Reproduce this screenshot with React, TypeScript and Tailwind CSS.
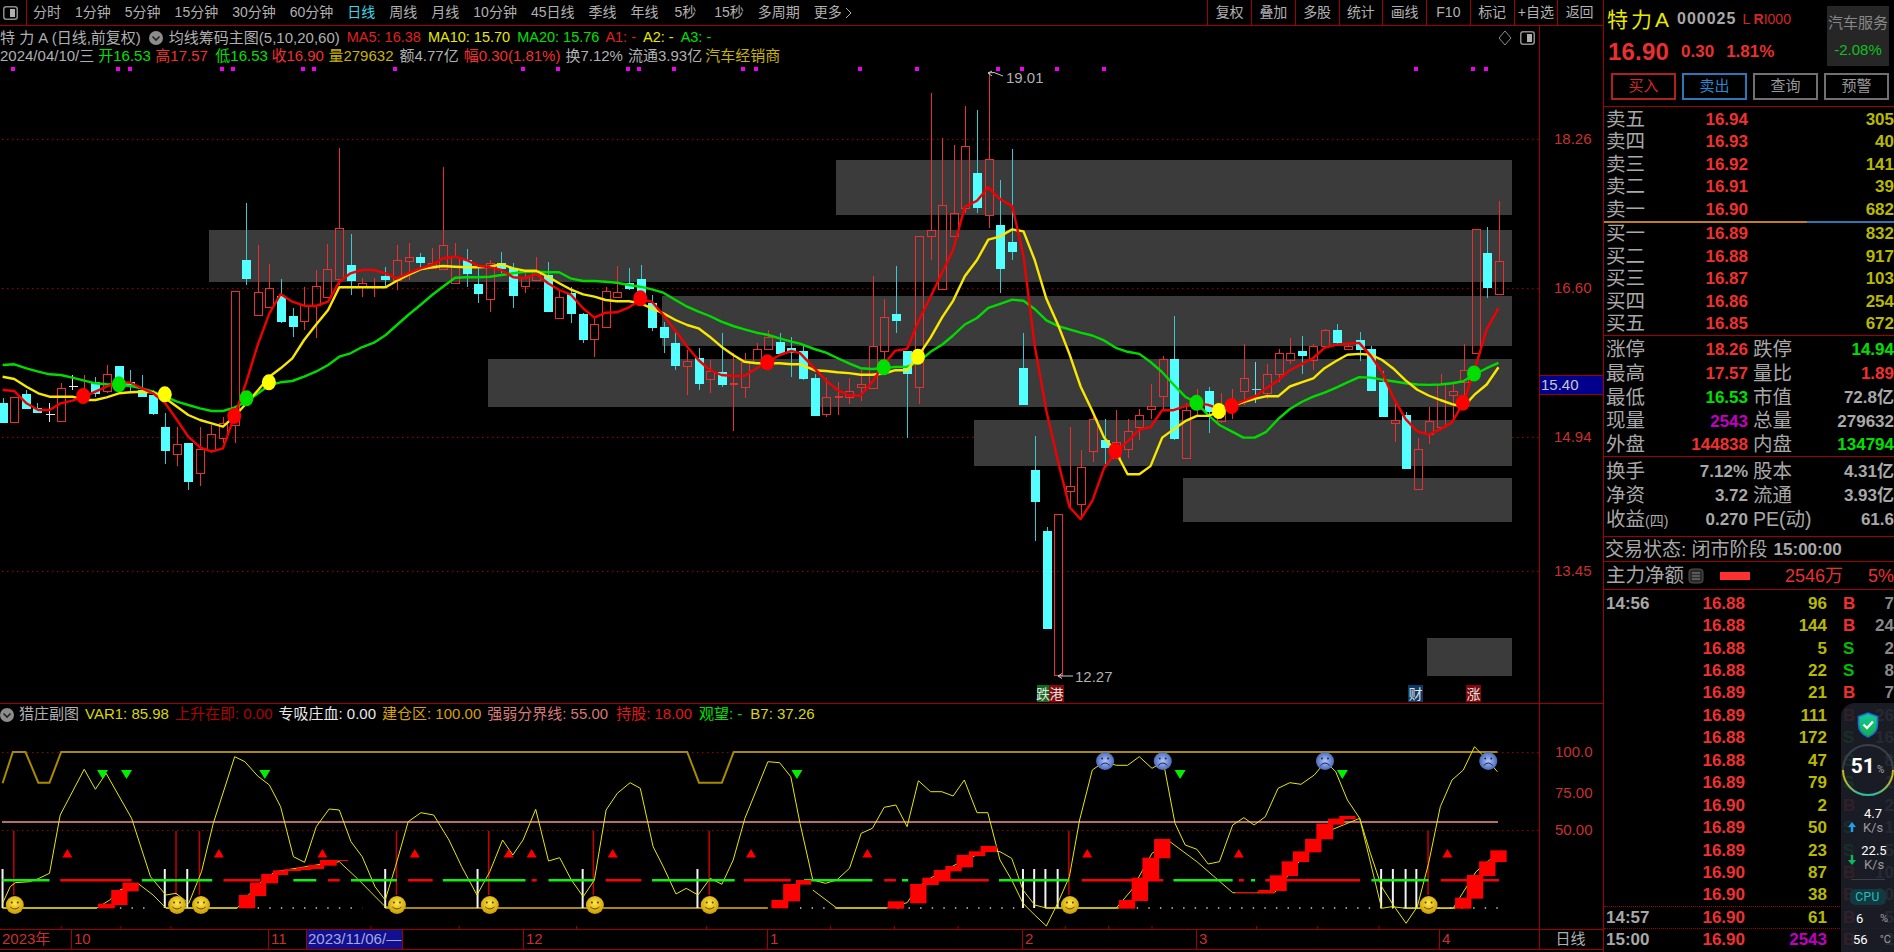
import React from "react";

const S8x = (x: number) => x / 1.96;
const S8y = (y: number) => 60 + y / 3;
const S9x = (x: number) => 800 + x / 1.96;
const S9y = (y: number) => 60 + y / 2.45;
const S6y = (y: number) => 690 + y / 3;

const pts = (a: number[], fx: (n: number) => number, fy: (n: number) => number) => {
  const o: string[] = [];
  for (let i = 0; i < a.length; i += 2) o.push(`${fx(a[i]).toFixed(1)},${fy(a[i + 1]).toFixed(1)}`);
  return o.join(" ");
};

// candles: type, wickTop, bodyTop, bodyBottom, wickBottom (zoom coordinates)
const C1: [string, number, number, number, number][] = [
  ["c",1015,1028,1085,1090],["r",1010,1010,1087,1090],["c",990,1002,1043,1045],["c",1030,1045,1057,1060],["w",1028,1061,1063,1085],["r",970,985,1082,1082],["w",945,979,981,990],["r",945,1000,1020,1030],["c",950,965,1000,1010],["r",915,943,993,1000],["c",918,918,985,990],["c",930,965,975,1000],["c",945,990,1008,1010],["c",990,1005,1058,1065],["c",1060,1100,1170,1212],["r",1102,1153,1183,1218],["c",1148,1148,1263,1290],["r",1100,1168,1238,1278],["r",1095,1122,1170,1175],["r",1070,1090,1135,1150],["r",692,692,1095,1150],["c",428,600,655,675],["r",555,695,764,764],["r",612,684,742,742],["c",656,708,783,790],["c",745,769,798,830],["r",680,735,782,810],["r",630,677,735,835],["r",552,628,710,710],["r",263,504,658,675],["c",522,615,660,705],["r",655,670,680,712],["r",655,678,682,712],["c",620,648,656,680],["r",555,601,660,690],["r",550,590,602,660],["c",580,590,607,630],["r",565,610,625,625],["r",320,556,628,630],["r",550,590,670,670],["c",567,600,640,680],["c",622,672,700,730],["r",600,610,718,757],["c",575,610,625,640],["c",610,625,705,745],["r",640,652,677,700],["r",590,635,660,660],["c",607,645,752,757],["r",690,710,773,775],["c",680,698,760,790],["c",760,762,838,848],["r",770,793,838,890],["r",680,692,800,800],["r",618,695,710,715],["c",625,670,685,690],["c",615,657,720,730],["c",705,730,802,812],["c",785,802,832,878],["c",818,848,915,930],["r",870,902,917,1005],["c",865,893,970,990],["r",900,932,958,998],["c",818,935,972,980],["f",880,970,973,1113],["r",880,905,980,1015],["r",850,868,905,905],["r",810,830,868,870],["c",820,845,878,880],["c",830,865,875,950],
];
const C2: [string, number, number, number, number][] = [
  ["c",700,712,778,785],["c",770,778,870,870],["r",780,825,868,875],["f",790,824,827,870],["r",780,810,825,842],["r",760,795,802,835],["r",528,700,803,805],["r",585,630,712,740],["c",505,622,636,668],["c",712,712,768,925],["r",430,430,800,842],["r",80,417,430,490],["r",190,356,560,560],["r",208,375,430,430],["r",113,210,362,375],["c",122,278,360,375],["r",30,243,380,412],["c",295,405,510,572],["c",218,447,468,490],["c",668,754,842,842],["c",920,1005,1080,1178],["c",1143,1155,1392,1392],["r",1113,1113,1507,1507],["r",898,1043,1057,1100],["r",955,997,1088,1120],["r",875,880,957,985],["c",880,930,947,990],["r",857,935,975,975],["r",880,910,953,975],["r",855,870,898,930],["r",795,847,856,880],["r",725,733,822,860],["c",628,733,925,930],["r",840,857,975,977],["r",805,845,855,870],["c",800,812,860,915],["r",815,862,885,890],["r",805,835,850,880],["r",695,780,810,845],["x",740,805,807,840],["r",745,770,815,830],["r",708,718,770,790],["r",680,718,735,745],["c",675,714,722,770],["r",695,700,735,760],["r",660,662,700,705],["c",647,662,692,700],["r",695,700,708,710],["c",667,685,708,738],["c",700,708,808,808],["c",762,788,872,875],["r",835,883,890,935],["c",862,870,1000,1002],["r",925,953,1052,1052],["r",850,885,917,940],["r",770,795,900,900],["r",790,810,820,880],["r",695,760,790,840],["r",415,415,717,720],["c",410,472,556,582],["r",345,492,574,574],
];

const MA5a = [5,990,28,993,52,1030,75,1050,97,1050,119,1030,142,1022,165,1010,187,995,209,980,233,965,256,968,278,985,300,1000,324,1030,347,1080,369,1130,392,1162,415,1175,437,1165,459,1070,483,965,506,850,528,760,550,702,573,725,596,737,619,738,643,725,665,665,687,640,709,630,733,630,756,640,778,655,800,640,824,625,847,615,868,595,892,590,914,600,937,617,960,622,983,630,1006,652,1028,655,1051,642,1074,670,1096,690,1118,703,1143,745,1165,773,1187,758,1209,757,1233,742,1255,720,1278,725,1300,765,1324,812,1347,860,1369,900,1391,930,1414,945,1437,948,1459,948,1483,925,1506,905,1528,885,1551,873];
const MA10a = [5,950,28,957,52,980,75,1000,97,1010,119,1010,142,1010,165,1020,187,1020,209,1012,233,1000,256,997,278,995,300,997,324,1015,347,1040,369,1065,392,1080,415,1090,437,1100,459,1070,483,1030,506,990,528,950,550,925,573,895,596,840,619,795,643,750,665,682,687,682,709,682,733,682,756,682,778,662,800,645,824,628,847,622,868,618,892,620,914,622,937,622,960,620,983,613,1006,625,1028,632,1051,632,1074,650,1096,670,1118,688,1143,703,1165,710,1187,720,1209,724,1233,724,1255,730,1278,745,1300,760,1324,780,1347,795,1369,805,1391,830,1414,860,1437,885,1459,905,1483,910,1506,910,1528,910,1551,913];
const MA20a = [5,915,28,913,52,925,75,935,97,943,119,945,142,953,165,962,187,970,209,973,233,975,256,978,278,985,300,995,324,1010,347,1025,369,1035,392,1045,415,1053,437,1053,459,1043,483,1025,506,1000,528,975,550,967,573,963,596,950,619,935,643,915,665,890,687,880,709,862,733,848,756,825,778,795,800,765,824,735,847,705,868,680,892,653,914,652,937,652,960,650,983,645,1006,640,1028,635,1051,635,1074,637,1096,637,1118,655,1143,663,1165,663,1187,665,1209,668,1233,675,1255,680,1278,688,1300,698,1324,720,1347,740,1369,755,1391,768,1414,785,1437,798,1459,808,1483,818,1506,825,1528,835,1551,845];
const MA5b = [0,718,28,755,51,785,73,808,96,822,119,822,141,790,165,745,187,712,210,708,232,640,256,580,279,520,300,465,323,360,347,345,369,312,391,340,416,358,438,480,460,700,483,860,506,985,528,1095,550,1125,573,1080,596,1000,619,960,642,935,665,905,687,900,710,858,732,858,755,848,778,840,800,845,823,855,846,848,869,835,891,825,913,805,937,785,960,760,983,745,1006,730,1028,705,1050,698,1073,695,1096,693,1119,725,1141,765,1162,825,1187,880,1210,910,1232,918,1255,905,1278,888,1300,840,1322,760,1346,660,1369,608];
const MA10b = [0,745,28,760,51,762,73,765,96,767,119,771,141,771,165,768,187,760,210,760,232,725,256,680,279,630,300,590,323,530,347,490,369,440,391,433,416,415,438,420,460,490,483,585,506,650,528,720,550,800,573,860,596,925,619,960,642,1015,665,1015,687,995,710,925,732,905,755,885,778,872,800,872,823,862,846,848,869,838,891,830,913,824,937,824,960,800,983,790,1006,780,1028,755,1050,738,1073,722,1096,720,1119,722,1141,735,1162,755,1187,785,1210,808,1232,822,1255,833,1278,843,1300,850,1322,820,1346,795,1369,753];
const MA20b = [0,695,28,708,51,717,73,730,96,743,119,755,141,757,165,755,187,752,210,752,232,740,256,715,279,697,300,675,323,648,347,632,369,607,391,598,416,587,438,590,460,610,483,638,506,652,528,660,550,668,573,675,596,687,619,705,642,715,665,720,687,740,710,765,732,795,755,825,778,840,800,870,823,895,846,910,869,925,891,925,913,912,937,880,960,855,983,838,1006,825,1028,815,1050,803,1073,790,1096,777,1119,778,1141,783,1162,787,1187,792,1210,795,1232,796,1255,795,1278,792,1300,787,1322,770,1346,755,1369,742];

const magenta = [13,118,130,222,233,303,314,395,523,558,628,639,674,743,756,860,917,998,1022,1057,1104,1416,1473,1486];
const boxes = [[836,160,676,55],[209,230,1303,52],[662,296,850,50],[488,359,1024,48],[974,420,538,46],[1183,478,329,44],[1427,638,85,38]];

const dots8: [number, number, string][] = [[163,1008,"#ff0000"],[233,973,"#00e000"],[323,1003,"#ffff00"],[483,1015,"#00e000"],[459,1068,"#ff0000"],[527,967,"#ffff00"],[1255,715,"#ff0000"],[1504,907,"#ff0000"]];
const dots9: [number, number, string][] = [[164,753,"#00e000"],[231,727,"#ffff00"],[618,958,"#ff0000"],[777,840,"#00e000"],[821,860,"#ffff00"],[846,848,"#ff0000"],[1299,840,"#ff0000"],[1321,768,"#00e000"]];

function Candles() {
  const all = [
    ...C1.map((c, i) => ({ c, i, fy: S8y })),
    ...C2.map((c, i) => ({ c, i: i + 69, fy: S9y })),
  ];
  return (
    <g shapeRendering="crispEdges">
      {all.map(({ c, i, fy }) => {
        const [t, hi, top, bot, lo] = c;
        const x = Math.round(i * 11.6 + 2.5) + 0.5;
        const yh = fy(hi), yt = Math.round(fy(top)) + 0.5, yb = Math.round(fy(bot)) + 0.5, yl = fy(lo);
        if (t === "w" || t === "x") {
          const col = t === "w" ? "#e8e8e8" : "#60e0e8";
          return (
            <g key={i} stroke={col}>
              <line x1={x} x2={x} y1={yh} y2={yl} />
              <line x1={x - 4} x2={x + 5} y1={yt} y2={yt} />
            </g>
          );
        }
        if (t === "c") {
          return (
            <g key={i}>
              <line x1={x} x2={x} y1={yh} y2={yl} stroke="#38c8d0" />
              <rect x={x - 4.5} y={yt - 0.5} width={9} height={yb - yt + 1} fill="#54ffff" />
            </g>
          );
        }
        if (t === "f") {
          return (
            <g key={i}>
              <line x1={x} x2={x} y1={yh} y2={yl} stroke="#e83030" />
              <rect x={x - 4} y={yt - 0.5} width={8} height={2} fill="#e83030" />
            </g>
          );
        }
        return (
          <g key={i} stroke="#e83030" fill="none">
            <line x1={x} x2={x} y1={yh} y2={yt} />
            <line x1={x} x2={x} y1={yb} y2={yl} />
            <rect x={x - 4} y={yt} width={8} height={Math.max(yb - yt, 1)} />
          </g>
        );
      })}
    </g>
  );
}

function MainChartSvg() {
  const line = (a: number[], b: number[], col: string) => (
    <polyline
      fill="none"
      stroke={col}
      strokeWidth={2.4}
      strokeLinejoin="round"
      points={pts(a, S8x, S8y) + " " + pts(b, S9x, S9y)}
    />
  );
  return (
    <svg className="absolute inset-0 h-full w-full" viewBox="0 26 1539 677" preserveAspectRatio="none">
      {[139.5, 288.5, 437.5, 571.5].map((y) => (
        <line key={y} x1={2} x2={1539} y1={y} y2={y} stroke="#9a0000" strokeDasharray="1.5 3.5" />
      ))}
      {boxes.map(([x, y, w, h]) => (
        <rect key={`${x}-${y}`} x={x} y={y} width={w} height={h} fill="#3b3b3b" />
      ))}
      {magenta.map((x) => (
        <rect key={x} x={x - 2} y={67} width={4} height={4} fill="#f000f0" />
      ))}
      <Candles />
      {line(MA20a, MA20b, "#00dc00")}
      {line(MA10a, MA10b, "#f8e800")}
      {line(MA5a, MA5b, "#f00000")}
      {dots8.map(([x, y, c]) => (
        <ellipse key={`${x}a`} cx={S8x(x)} cy={S8y(y)} rx={7} ry={8} fill={c} />
      ))}
      {dots9.map(([x, y, c]) => (
        <ellipse key={`${x}b`} cx={S9x(x)} cy={S9y(y)} rx={7} ry={8} fill={c} />
      ))}
      <g stroke="#c8c8c8" fill="none">
        <path d="M1003 76 L994 72.5 L988 73 M988 73 L992 71 M988 73 L992 76" />
        <path d="M1073 676 L1058 676 M1058 676 L1062 673.5 M1058 676 L1062 678.5" />
      </g>
      <text x={1006} y={83} fill="#b0b0b0" fontSize={15} fontFamily="Liberation Sans">19.01</text>
      <text x={1075} y={682} fill="#b0b0b0" fontSize={15} fontFamily="Liberation Sans">12.27</text>
      <rect x={1037} y={685} width={12} height={17} fill="#0e6a1e" />
      <rect x={1049} y={685} width={15} height={17} fill="#800808" />
      <rect x={1408} y={685} width={15} height={17} fill="#0c3a68" />
      <rect x={1466} y={685} width={15} height={17} fill="#800808" />
      <g fontSize={14} fontFamily="Noto Sans CJK SC" fill="#e0e0e0">
        <text x={1036} y={699}>跌</text>
        <text x={1049.5} y={699}>港</text>
        <text x={1408.5} y={699}>财</text>
        <text x={1466.5} y={699}>涨</text>
      </g>
    </svg>
  );
}

const Var1a = [5,640,20,590,30,578,58,575,75,566,97,550,118,375,165,238,187,298,208,250,258,385,295,560,325,615,345,610,370,640,395,545,418,400,460,200,480,215,505,258,528,285,550,350,575,500,597,517,620,410,645,357,665,360,688,455,710,500,735,590,755,630,775,530,800,395,825,368,850,375,880,450,905,530,935,615,960,545,985,450,1005,495,1025,450,1050,358,1075,513,1097,503,1120,570,1143,620,1165,570,1188,360,1210,310,1235,278,1255,295,1280,470,1300,530,1325,612,1345,595,1368,615,1392,565,1415,583,1437,510,1460,385,1505,215,1528,218,1550,260,1568,400];
const Var1b = [0,400,25,570,50,580,72,570,97,535,120,430,142,415,165,352,188,345,210,410,232,272,256,305,278,305,300,318,322,270,347,368,368,368,392,510,415,570,437,640,460,675,483,708,505,640,528,560,548,390,573,240,596,215,620,226,642,226,665,200,690,235,712,215,735,400,755,465,778,478,800,522,822,515,848,405,870,383,890,405,912,380,937,295,960,278,982,283,1008,255,1030,215,1050,245,1073,330,1097,385,1118,490,1140,590,1165,650,1188,700,1210,650,1232,520,1255,350,1278,270,1300,240,1322,170,1347,210,1367,245];
const Lowa = [5,654,190,654,215,630,235,600,270,580,300,615,325,654,465,654,490,610,515,570,540,545,620,525,665,515,700,565,755,650,785,654];
const Lowb = [25,600,72,654,170,654,210,638,232,590,255,565,322,510,368,482,392,485,415,505,437,600,460,645,483,654,620,654,650,600,690,490,725,455,778,515,848,608,930,608,970,530,1025,430,1097,385,1140,655,1160,650,1188,655,1280,655,1325,545,1367,490];
const Goldtop = [5,280,25,186,50,186,75,278,97,278,120,186,1347,186,1370,278,1415,278,1438,186];
const S7x = S9x;

const blocks6 = [[192,225,641,655],[218,250,600,645],[240,272,578,604],[468,500,615,655],[490,522,578,618],[512,545,552,580],[535,565,541,555],[558,590,537,543],[581,610,532,540],[603,635,525,537],[627,660,510,527],[650,682,510,513],[1512,1545,630,655],[1535,1568,582,634]];
const blocks7 = [[-8,22,570,584],[172,204,634,656],[216,248,582,640],[240,272,563,585],[262,295,540,570],[285,317,528,544],[307,339,495,532],[331,363,484,498],[354,386,468,486],[625,657,630,656],[650,682,563,633],[671,704,503,570],[694,726,447,505],[853,897,606,609],[898,930,600,610],[921,954,556,603],[944,976,514,558],[966,998,484,516],[990,1022,447,487],[1012,1045,401,448],[1035,1067,386,404],[1057,1089,378,388],[1284,1316,623,656],[1307,1339,555,626],[1331,1363,514,558],[1353,1385,481,516]];
const green6 = [[5,97],[278,416],[575,620],[688,778],[868,1030],[1075,1165],[1278,1440]];
const red6 = [[118,258],[438,510],[643,666],[800,848],[1042,1052],[1187,1257],[1458,1550]];
const green7 = [[8,142],[200,212],[390,528],[732,848],[884,892],[1120,1232]];
const red7 = [[165,188],[240,370],[552,712],[860,870],[912,1098],[1256,1370]];
const redV = [27,345,391,777,958,1163,1390].map(S8x).concat([527,1231].map(S7x));
const whiteV = [5,323,367,755,936,1142,1367].map(S8x).concat([437,459,481,505,1139,1162,1187,1208].map(S7x));
const smiles = [29,347,394,778,960,1166,1391].map(S8x).concat([529,1232].map(S7x));
const redT = [132,429,632,813,997,1042,1201,1472].map(S8x).concat([132,563,860,1269].map(S7x));
const greenT = [201,248,519,1562].map(S8x).concat([745,1063].map(S7x));
const sad = [598,711,1029,1349].map(S7x);
const dotted6 = [[235,300],[505,710]];
const dotted7 = [[0,70],[190,430],[660,1370]];

function SubChartSvg() {
  return (
    <svg className="absolute inset-0 h-full w-full" viewBox="0 704 1539 225" preserveAspectRatio="none">
      <defs>
        <radialGradient id="smile" cx="50%" cy="40%" r="60%">
          <stop offset="0%" stopColor="#ffe84a" />
          <stop offset="100%" stopColor="#c89a00" />
        </radialGradient>
        <radialGradient id="sadf" cx="50%" cy="50%" r="60%">
          <stop offset="0%" stopColor="#b0c4f8" />
          <stop offset="100%" stopColor="#3858b0" />
        </radialGradient>
      </defs>
      <line x1={2} x2={1539} y1={752.5} y2={752.5} stroke="#9a0000" strokeDasharray="1.5 3.5" />
      <line x1={2} x2={1539} y1={830.5} y2={830.5} stroke="#9a0000" strokeDasharray="1.5 3.5" />
      <line x1={2} x2={1498} y1={822} y2={822} stroke="#b86c6c" strokeWidth={2} />
      <polyline fill="none" stroke="#a88a00" strokeWidth={2} points={pts(Goldtop, S8x, S6y) + ` ${S7x(1367)},${S6y(186)}`} />
      {[[5,190],[325,465],[755,1505]].map(([a, b]) => (
        <line key={a} x1={S8x(a)} x2={S8x(b)} y1={908} y2={908} stroke="#a88a00" strokeWidth={2} />
      ))}
      {[[70,170],[480,625],[1185,1285]].map(([a, b]) => (
        <line key={a} x1={S7x(a)} x2={S7x(b)} y1={908} y2={908} stroke="#a88a00" strokeWidth={2} />
      ))}
      {dotted6.map(([a, b]) => (
        <line key={a} x1={S8x(a)} x2={S8x(b)} y1={908} y2={908} stroke="#c8c8c8" strokeWidth={1.4} strokeDasharray="1.4 10.2" />
      ))}
      {dotted7.map(([a, b]) => (
        <line key={a} x1={S7x(a)} x2={S7x(b)} y1={908} y2={908} stroke="#c8c8c8" strokeWidth={1.4} strokeDasharray="1.4 10.2" />
      ))}
      {redV.map((x) => (
        <line key={x} x1={x} x2={x} y1={831} y2={895} stroke="#c80000" strokeWidth={1.5} />
      ))}
      {whiteV.map((x) => (
        <line key={x} x1={x} x2={x} y1={869} y2={908} stroke="#f4f4f4" strokeWidth={2} />
      ))}
      <polyline fill="none" stroke="#e8e800" strokeWidth={1} points={pts(Var1a, S8x, S6y) + " " + pts(Var1b, S7x, S6y)} />
      <polyline fill="none" stroke="#e0e000" strokeWidth={1} points={pts(Lowa, S8x, S6y)} />
      <polyline fill="none" stroke="#e0e000" strokeWidth={1} points={pts(Lowb, S7x, S6y)} />
      {green6.map(([a, b]) => <rect key={a} x={S8x(a)} y={879} width={S8x(b - a)} height={2.5} fill="#10f010" />)}
      {red6.map(([a, b]) => <rect key={a} x={S8x(a)} y={879} width={S8x(b - a)} height={2.5} fill="#ff0000" />)}
      {green7.map(([a, b]) => <rect key={a} x={S7x(a)} y={879} width={S8x(b - a)} height={2.5} fill="#10f010" />)}
      {red7.map(([a, b]) => <rect key={a} x={S7x(a)} y={879} width={S8x(b - a)} height={2.5} fill="#ff0000" />)}
      {blocks6.map(([a, b, t, u]) => <rect key={`${a}-${t}`} x={S8x(a)} y={S6y(t)} width={S8x(b - a)} height={(u - t) / 3} fill="#ff0000" />)}
      {blocks7.map(([a, b, t, u]) => <rect key={`${a}-${t}`} x={S7x(a)} y={S6y(t)} width={S8x(b - a)} height={(u - t) / 3} fill="#ff0000" />)}
      {redT.map((x) => <polygon key={x} points={`${x},849 ${x + 5},857.5 ${x - 5},857.5`} fill="#ff0000" />)}
      {greenT.map((x) => <polygon key={x} points={`${x - 5.5},770 ${x + 5.5},770 ${x},779`} fill="#00f000" />)}
      {smiles.map((x) => (
        <g key={x}>
          <ellipse cx={x} cy={905} rx={9} ry={9} fill="url(#smile)" />
          <circle cx={x - 3} cy={902.5} r={1} fill="#5a4000" />
          <circle cx={x + 3} cy={902.5} r={1} fill="#5a4000" />
          <path d={`M${x - 4.5} 907 Q${x} 911 ${x + 4.5} 907`} fill="none" stroke="#6a4a00" strokeWidth={1} />
        </g>
      ))}
      {sad.map((x) => (
        <g key={x}>
          <ellipse cx={x} cy={761} rx={9} ry={9} fill="url(#sadf)" />
          <circle cx={x - 3} cy={758.5} r={1} fill="#182860" />
          <circle cx={x + 3} cy={758.5} r={1} fill="#182860" />
          <path d={`M${x - 4.5} 765.5 Q${x} 760.5 ${x + 4.5} 765.5`} fill="none" stroke="#182860" strokeWidth={1} />
        </g>
      ))}
      <g stroke="#a00000">
        {[120,237,335,727,900,1130,1385].map((x) => <line key={x} x1={S8x(x)} x2={S8x(x)} y1={926} y2={929} />)}
        {[60,185,310,520,605,690,895,1015,1135].map((x) => <line key={x} x1={S7x(x)} x2={S7x(x)} y1={926} y2={929} />)}
      </g>
    </svg>
  );
}

function ChevronDot() {
  return (
    <svg width="14" height="14" viewBox="0 0 14 14" className="shrink-0">
      <circle cx="7" cy="7" r="7" fill="#8c8c8c" />
      <path d="M3.5 5.5 L7 9 L10.5 5.5" fill="none" stroke="#222" strokeWidth="1.6" />
    </svg>
  );
}

function PanelIcon({ cls }: { cls: string }) {
  return (
    <svg width="15" height="14" viewBox="0 0 15 14" className={cls}>
      <rect x="0.75" y="0.75" width="13.5" height="12.5" rx="2.5" fill="none" stroke="#8c8c8c" strokeWidth="1.5" />
      <rect x="7" y="3" width="5" height="8" fill="#b0b0b0" />
    </svg>
  );
}

const tabs = ["分时","1分钟","5分钟","15分钟","30分钟","60分钟","日线","周线","月线","10分钟","45日线","季线","年线","5秒","15秒","多周期"];
const tools = ["复权","叠加","多股","统计","画线","F10","标记","+自选","返回"];

function TopBar() {
  return (
    <div className="flex h-[26px] shrink-0 items-center border-b border-[#a00000] text-[14px] text-[#b0b0b0]">
      <div className="flex h-full w-[27px] shrink-0 items-center border-r border-[#a00000] pl-[3px]">
        <PanelIcon cls="" />
      </div>
      <div className="ml-[6px] flex items-center gap-[14px] whitespace-nowrap">
        {tabs.map((t) => (
          <span key={t} className={t === "日线" ? "text-[#38d8e8]" : t === "5秒" ? "ml-[2px]" : t === "15秒" ? "ml-[4px]" : ""}>{t}</span>
        ))}
        <span className="flex items-center">
          更多
          <svg width="7" height="12" viewBox="0 0 7 12" className="ml-[3px]">
            <path d="M1 1 L6 6 L1 11" fill="none" stroke="#b0b0b0" />
          </svg>
        </span>
      </div>
      <div className="ml-auto flex h-full shrink-0">
        {tools.map((t) => (
          <div key={t} className="flex h-full w-[43.75px] items-center justify-center border-l border-[#a00000]">{t}</div>
        ))}
        <div className="w-[2px]" />
      </div>
    </div>
  );
}

function MainChart() {
  return (
    <div className="flex h-[678px] shrink-0 border-b border-[#a00000]">
      <div className="relative w-[1540px] shrink-0 overflow-hidden border-r border-[#a00000]">
        <MainChartSvg />
        <div className="relative flex h-[21px] items-center whitespace-nowrap pt-[3px] text-[15px]">
          <span className="text-[#b0b0b0]">特 力 A (日线,前复权)</span>
          <span className="ml-[8px]"><ChevronDot /></span>
          <span className="ml-[6px] text-[#b0b0b0]">均线筹码主图(5,10,20,60)</span>
          <span className="ml-[7px] text-[14.5px] text-[#e02020]">MA5: 16.38</span>
          <span className="ml-[7px] text-[14.5px] text-[#e8e800]">MA10: 15.70</span>
          <span className="ml-[7px] text-[14.5px] text-[#00e000]">MA20: 15.76</span>
          <span className="ml-[6px] text-[14.5px] text-[#e02020]">A1: -</span>
          <span className="ml-[7px] text-[14.5px] text-[#e8e800]">A2: -</span>
          <span className="ml-[7px] text-[14.5px] text-[#00e000]">A3: -</span>
        </div>
        <div className="relative flex h-[18px] items-center whitespace-nowrap text-[15px] text-[#b0b0b0]">
          <span>2024/04/10/三</span>
          <span className="ml-[4px] text-[#00e000]">开16.53</span>
          <span className="ml-[4.5px] text-[#f03030]">高17.57</span>
          <span className="ml-[7.5px] text-[#00e000]">低16.53</span>
          <span className="ml-[3.5px] text-[#f03030]">收16.90</span>
          <span className="ml-[4.5px] text-[#c8b400]">量279632</span>
          <span className="ml-[6px]">额4.77亿</span>
          <span className="ml-[5px] text-[#f03030]">幅0.30(1.81%)</span>
          <span className="ml-[5px]">换7.12%</span>
          <span className="ml-[5px]">流通3.93亿</span>
          <span className="ml-[3px] text-[#c8b400]">汽车经销商</span>
        </div>
        <div className="absolute left-[1498px] top-[4px] flex items-center gap-[8px]">
          <svg width="14" height="16" viewBox="0 0 14 16">
            <path d="M7 1 L13 8 L7 15 L1 8 Z" fill="none" stroke="#8c8c8c" />
          </svg>
          <PanelIcon cls="" />
        </div>
      </div>
      <div className="relative flex-1 text-[15px] text-[#c83030]">
        <span className="absolute left-[14px] top-[113px] -translate-y-1/2">18.26</span>
        <span className="absolute left-[14px] top-[262px] -translate-y-1/2">16.60</span>
        <div className="absolute left-0 right-0 top-[349px] flex h-[20px] items-center border-y border-[#a00000] bg-[#00008c] pl-[1px] text-[#c8c8c8]">15.40</div>
        <span className="absolute left-[14px] top-[411px] -translate-y-1/2">14.94</span>
        <span className="absolute left-[14px] top-[545px] -translate-y-1/2">13.45</span>
      </div>
    </div>
  );
}

function SubChart() {
  return (
    <div className="flex h-[226px] shrink-0 border-b border-[#a00000]">
      <div className="relative w-[1540px] shrink-0 overflow-hidden border-r border-[#a00000]">
        <SubChartSvg />
        <div className="relative flex h-[21px] items-center whitespace-nowrap text-[15px]">
          <ChevronDot />
          <span className="ml-[5px] text-[#b0b0b0]">猎庄副图</span>
          <span className="ml-[6px] text-[#d8d800]">VAR1: 85.98</span>
          <span className="ml-[6px] text-[#b00000]">上升在即: 0.00</span>
          <span className="ml-[6px] text-[#e8e8e8]">专吸庄血: 0.00</span>
          <span className="ml-[6px] text-[#d8a000]">建仓区: 100.00</span>
          <span className="ml-[6px] text-[#d87878]">强弱分界线: 55.00</span>
          <span className="ml-[8px] text-[#e01818]">持股: 18.00</span>
          <span className="ml-[7px] text-[#00e000]">观望: -</span>
          <span className="ml-[8px] text-[#d8d800]">B7: 37.26</span>
        </div>
      </div>
      <div className="relative flex-1 text-[15px] text-[#c83030]">
        <span className="absolute left-[15px] top-[48px] -translate-y-1/2">100.0</span>
        <span className="absolute left-[15px] top-[89px] -translate-y-1/2">75.00</span>
        <span className="absolute left-[15px] top-[126px] -translate-y-1/2">50.00</span>
      </div>
    </div>
  );
}

const months = [
  { t: "2023年", w: "w-[72px]" },
  { t: "10", w: "w-[197px]" },
  { t: "11", w: "w-[255px]" },
  { t: "12", w: "w-[244px]" },
  { t: "1", w: "w-[255px]" },
  { t: "2", w: "w-[174px]" },
  { t: "3", w: "w-[243px]" },
  { t: "4", w: "w-[100px]" },
];

function DateAxis() {
  return (
    <div className="relative flex h-[20px] shrink-0 border-b border-[#a00000] text-[15px] text-[#c83030]">
      {months.map((m) => (
        <div key={m.t} className={`${m.w} flex shrink-0 items-center border-r border-[#a00000] pl-[2px]`}>{m.t}</div>
      ))}
      <div className="flex flex-1 items-center justify-center pr-[2px] text-[#b0b0b0]">日线</div>
      <div className="absolute left-[306px] top-0 flex h-[19px] w-[97px] items-center border-x border-[#a00000] bg-[#101090] pl-[1px] text-[#a8a8d8]">2023/11/06/—</div>
    </div>
  );
}

function Book({ l, p, v }: { l: string; p: string; v: string }) {
  return (
    <div className="flex h-[22.5px] items-center">
      <div className="flex w-[144px] shrink-0 items-center justify-between pl-[2px]">
        <span className="text-[19.5px] leading-none text-[#a8a8a8]">{l}</span>
        <span className="text-[17px] font-bold leading-none text-[#f03030]">{p}</span>
      </div>
      <span className="flex-1 whitespace-nowrap text-right text-[17px] font-bold leading-none text-[#b8b800]">{v}</span>
    </div>
  );
}

function Stat({ a, b, c, d, bc, dc }: { a: React.ReactNode; b: string; c: string; d: string; bc: string; dc: string }) {
  return (
    <div className="flex h-[23.75px] items-center text-[19.5px] leading-none text-[#a8a8a8]">
      <div className="flex w-[144px] shrink-0 items-center justify-between pl-[2px]">
        <span className="whitespace-nowrap">{a}</span>
        <span className={`${bc} whitespace-nowrap text-[17px] font-bold`}>{b}</span>
      </div>
      <div className="ml-[5px] flex flex-1 items-center justify-between">
        <span className="whitespace-nowrap">{c}</span>
        <span className={`${dc} whitespace-nowrap text-[17px] font-bold`}>{d}</span>
      </div>
    </div>
  );
}

const ticks: [string, string, string, string, string][] = [
  ["14:56","16.88","96","B","7"],["","16.88","144","B","24"],["","16.88","5","S","2"],["","16.88","22","S","8"],["","16.89","21","B","7"],["","16.89","111","B","26"],["","16.88","172","S","16"],["","16.88","47","S","8"],["","16.89","79","S","1"],["","16.90","2","B","2"],["","16.89","50","S","1"],["","16.89","23","S","5"],["","16.90","87","B","10"],["","16.90","38","B","10"],["14:57","16.90","61","B","5"],["15:00","16.90","2543","B","2"],
];

function Widget() {
  return (
    <div className="absolute bottom-0 right-0 flex h-[249px] w-[53px] flex-col items-center rounded-tl-[14px] bg-[#1c1f29]/90 font-['Roboto','Liberation_Sans',sans-serif]">
      <svg width="22" height="26" viewBox="0 0 22 26" className="mt-[9px]">
        <defs>
          <linearGradient id="sh" x1="0" y1="0" x2="0" y2="1">
            <stop offset="0%" stopColor="#12c8a0" />
            <stop offset="100%" stopColor="#10b040" />
          </linearGradient>
        </defs>
        <path d="M11 1 L20.5 4.5 V12 C20.5 18.5 16 23 11 25 C6 23 1.5 18.5 1.5 12 V4.5 Z" fill="url(#sh)" stroke="#1d6ad0" strokeWidth="1.6" />
        <path d="M6.5 12.5 L10 16 L16 9.5" fill="none" stroke="#fff" strokeWidth="2.4" />
      </svg>
      <div className="relative mt-[5px] h-[54px] w-[54px]">
        <svg width="54" height="54" viewBox="0 0 54 54" className="absolute inset-0">
          <defs>
            <linearGradient id="gau" x1="0" y1="0" x2="1" y2="0">
              <stop offset="0%" stopColor="#c8b820" />
              <stop offset="35%" stopColor="#30b8a0" />
              <stop offset="65%" stopColor="#30b8a0" />
              <stop offset="100%" stopColor="#c8b820" />
            </linearGradient>
          </defs>
          <path d="M2 27 A25 25 0 0 1 52 27" fill="none" stroke="#3a3f4a" strokeWidth="2" />
          <path d="M2 27 A25 25 0 0 0 52 27" fill="none" stroke="url(#gau)" strokeWidth="2" />
        </svg>
        <div className="absolute inset-0 flex items-baseline justify-center pt-[13px] text-white">
          <span className="text-[21px] font-bold leading-none">51</span>
          <span className="ml-[2px] text-[10px] leading-none text-[#a8a8a8]">%</span>
        </div>
      </div>
      <div className="mt-[10px] flex w-full items-start">
        <svg width="10" height="12" viewBox="0 0 10 12" className="ml-[6px] mt-[14px] shrink-0">
          <path d="M5 1 L9 6 H6.2 V11 H3.8 V6 H1 Z" fill="#1ea0f0" />
        </svg>
        <div className="flex flex-1 flex-col items-center pr-[5px] text-[13px] leading-[14px] text-white">
          <span>4.7</span>
          <span className="text-[#9a9a9a]">K/s</span>
        </div>
      </div>
      <div className="mt-[9px] flex w-full items-start">
        <svg width="10" height="12" viewBox="0 0 10 12" className="ml-[6px] mt-[10px] shrink-0">
          <path d="M5 11 L9 6 H6.2 V1 H3.8 V6 H1 Z" fill="#10b860" />
        </svg>
        <div className="flex flex-1 flex-col items-center pr-[3px] text-[13px] leading-[14px] text-white">
          <span>22.5</span>
          <span className="text-[#9a9a9a]">K/s</span>
        </div>
      </div>
      <div className="mt-[7px] h-px w-[34px] bg-[#3a3f4a]" />
      <div className="mt-[9px] flex h-[16px] w-[36px] items-center justify-center rounded-[5px] bg-[#12393f] text-[12px] tracking-[0.5px] text-[#20c0c0]">CPU</div>
      <div className="mt-[6px] flex w-full items-center justify-between px-[6px] text-[13px] leading-[16px] text-white">
        <span className="pl-[9px]">6</span>
        <span className="text-[11px] text-[#a0a0a0]">%</span>
      </div>
      <div className="mt-[5px] flex w-full items-center justify-between pl-[12px] pr-[3px] text-[13px] leading-[16px] text-white">
        <span>56</span>
        <span className="text-[11px] text-[#a0a0a0]">°C</span>
      </div>
    </div>
  );
}

function Quote() {
  return (
    <div className="relative w-[290px] shrink-0 overflow-hidden">
      <div className="h-[107px] border-b border-[#a00000]">
        <div className="flex h-[66px]">
          <div className="flex-1">
            <div className="flex h-[38px] items-center pl-[3px] whitespace-nowrap">
              <span className="text-[21px] leading-none tracking-[3px] text-[#e8e800]">特力A</span>
              <span className="ml-[5px] text-[16px] font-bold tracking-[1px] text-[#a8a8a8]">000025</span>
              <span className="ml-[6px] text-[14px] text-[#d02828]">L <span className="font-bold">R</span>I000</span>
            </div>
            <div className="flex h-[28px] items-center whitespace-nowrap pl-[4px] text-[#e83030]">
              <span className="text-[24px] font-bold leading-none tracking-[0.2px]">16.90</span>
              <span className="ml-[12px] text-[17px] font-semibold">0.30</span>
              <span className="ml-[12px] text-[17px] font-semibold">1.81%</span>
            </div>
          </div>
          <div className="mr-[5px] mt-[6px] flex h-[60px] w-[62px] flex-col items-center justify-around bg-[#262626] py-[3px]">
            <span className="whitespace-nowrap text-[15px] leading-none text-[#888888]">汽车服务</span>
            <span className="text-[15px] leading-none text-[#10c020]">-2.08%</span>
          </div>
        </div>
        <div className="mt-[7px] flex gap-[6px] pl-[7px] text-[15px]">
          <div className="flex h-[27px] w-[65px] items-center justify-center border-2 border-[#b02020] text-[#d02828]">买入</div>
          <div className="flex h-[27px] w-[65px] items-center justify-center border-2 border-[#2a78b8] text-[#2a88d0]">卖出</div>
          <div className="flex h-[27px] w-[65px] items-center justify-center border-2 border-[#707070] text-[#989898]">查询</div>
          <div className="flex h-[27px] w-[65px] items-center justify-center border-2 border-[#707070] text-[#989898]">预警</div>
        </div>
      </div>
      <div className="pt-px">
        <Book l="卖五" p="16.94" v="305" />
        <Book l="卖四" p="16.93" v="40" />
        <Book l="卖三" p="16.92" v="141" />
        <Book l="卖二" p="16.91" v="39" />
        <Book l="卖一" p="16.90" v="682" />
      </div>
      <div className="flex h-[2px]">
        <div className="w-[203px] bg-[#c08018]" />
        <div className="flex-1 bg-[#2a78b8]" />
      </div>
      <div className="border-b border-[#a00000]">
        <Book l="买一" p="16.89" v="832" />
        <Book l="买二" p="16.88" v="917" />
        <Book l="买三" p="16.87" v="103" />
        <Book l="买四" p="16.86" v="254" />
        <Book l="买五" p="16.85" v="672" />
      </div>
      <div className="h-[121px] border-b border-[#a00000] pt-[2px]">
        <Stat a="涨停" b="18.26" bc="text-[#f03030]" c="跌停" d="14.94" dc="text-[#00e000]" />
        <Stat a="最高" b="17.57" bc="text-[#f03030]" c="量比" d="1.89" dc="text-[#f03030]" />
        <Stat a="最低" b="16.53" bc="text-[#00e000]" c="市值" d="72.8亿" dc="text-[#a8a8a8]" />
        <Stat a="现量" b="2543" bc="text-[#c000c0]" c="总量" d="279632" dc="text-[#a8a8a8]" />
        <Stat a="外盘" b="144838" bc="text-[#f03030]" c="内盘" d="134794" dc="text-[#00e000]" />
      </div>
      <div className="h-[80px] border-b border-[#a00000] pt-[3px]">
        <Stat a="换手" b="7.12%" bc="text-[#a8a8a8]" c="股本" d="4.31亿" dc="text-[#a8a8a8]" />
        <Stat a="净资" b="3.72" bc="text-[#a8a8a8]" c="流通" d="3.93亿" dc="text-[#a8a8a8]" />
        <Stat a={<>收益<span className="text-[14px]">(四)</span></>} b="0.270" bc="text-[#a8a8a8]" c="PE(动)" d="61.6" dc="text-[#a8a8a8]" />
      </div>
      <div className="flex h-[25px] items-center border-b border-[#a00000] pl-[1px] text-[19px] leading-none text-[#a8a8a8] whitespace-nowrap">
        <span>交易状态: 闭市阶段</span>
        <span className="ml-[6px] text-[17px] font-bold">15:00:00</span>
      </div>
      <div className="flex h-[28px] items-center border-b border-[#a00000] pl-[2px] text-[19.5px] leading-none text-[#a8a8a8] whitespace-nowrap">
        <span>主力净额</span>
        <svg width="16" height="16" viewBox="0 0 16 16" className="ml-[4px]">
          <rect x="1" y="1" width="14" height="14" rx="3" fill="#2a2a2a" stroke="#505050" />
          <path d="M4 5 H12 M4 8 H12 M4 11 H12" stroke="#8a8a8a" />
        </svg>
        <div className="ml-[16px] h-[8px] w-[30px] bg-[#ff3030]" />
        <span className="ml-[35px] text-[18px] text-[#e83030]">2546万</span>
        <span className="ml-auto text-[18px] text-[#e83030]">5%</span>
      </div>
      <div className="pt-[2px]">
        {ticks.map(([t, p, v, d, n], i) => (
          <div key={i} className={`flex h-[22.45px] items-center text-[17px] font-bold leading-none whitespace-nowrap ${i === 14 ? "border-y border-dotted border-[#a00000]" : ""}`}>
            <span className="w-[71px] shrink-0 pl-[2px] text-[#a8a8a8]">{t}</span>
            <span className="w-[70px] shrink-0 text-right text-[#f03030]">{p}</span>
            <span className={`w-[82px] shrink-0 text-right ${v === "2543" ? "text-[#c000c0]" : "text-[#b8b800]"}`}>{v}</span>
            <span className={`ml-[16px] w-[20px] shrink-0 ${d === "B" ? "text-[#f03030]" : "text-[#00c000]"}`}>{d}</span>
            <span className="flex-1 text-right text-[#888888]">{n}</span>
          </div>
        ))}
      </div>
      <Widget />
    </div>
  );
}

export default function App() {
  return (
    <div className="flex h-[952px] w-[1894px] overflow-hidden bg-black font-['Liberation_Sans','Noto_Sans_CJK_SC',sans-serif]">
      <div className="flex w-[1604px] shrink-0 flex-col border-r border-[#a00000]">
        <TopBar />
        <MainChart />
        <SubChart />
        <DateAxis />
      </div>
      <Quote />
    </div>
  );
}
